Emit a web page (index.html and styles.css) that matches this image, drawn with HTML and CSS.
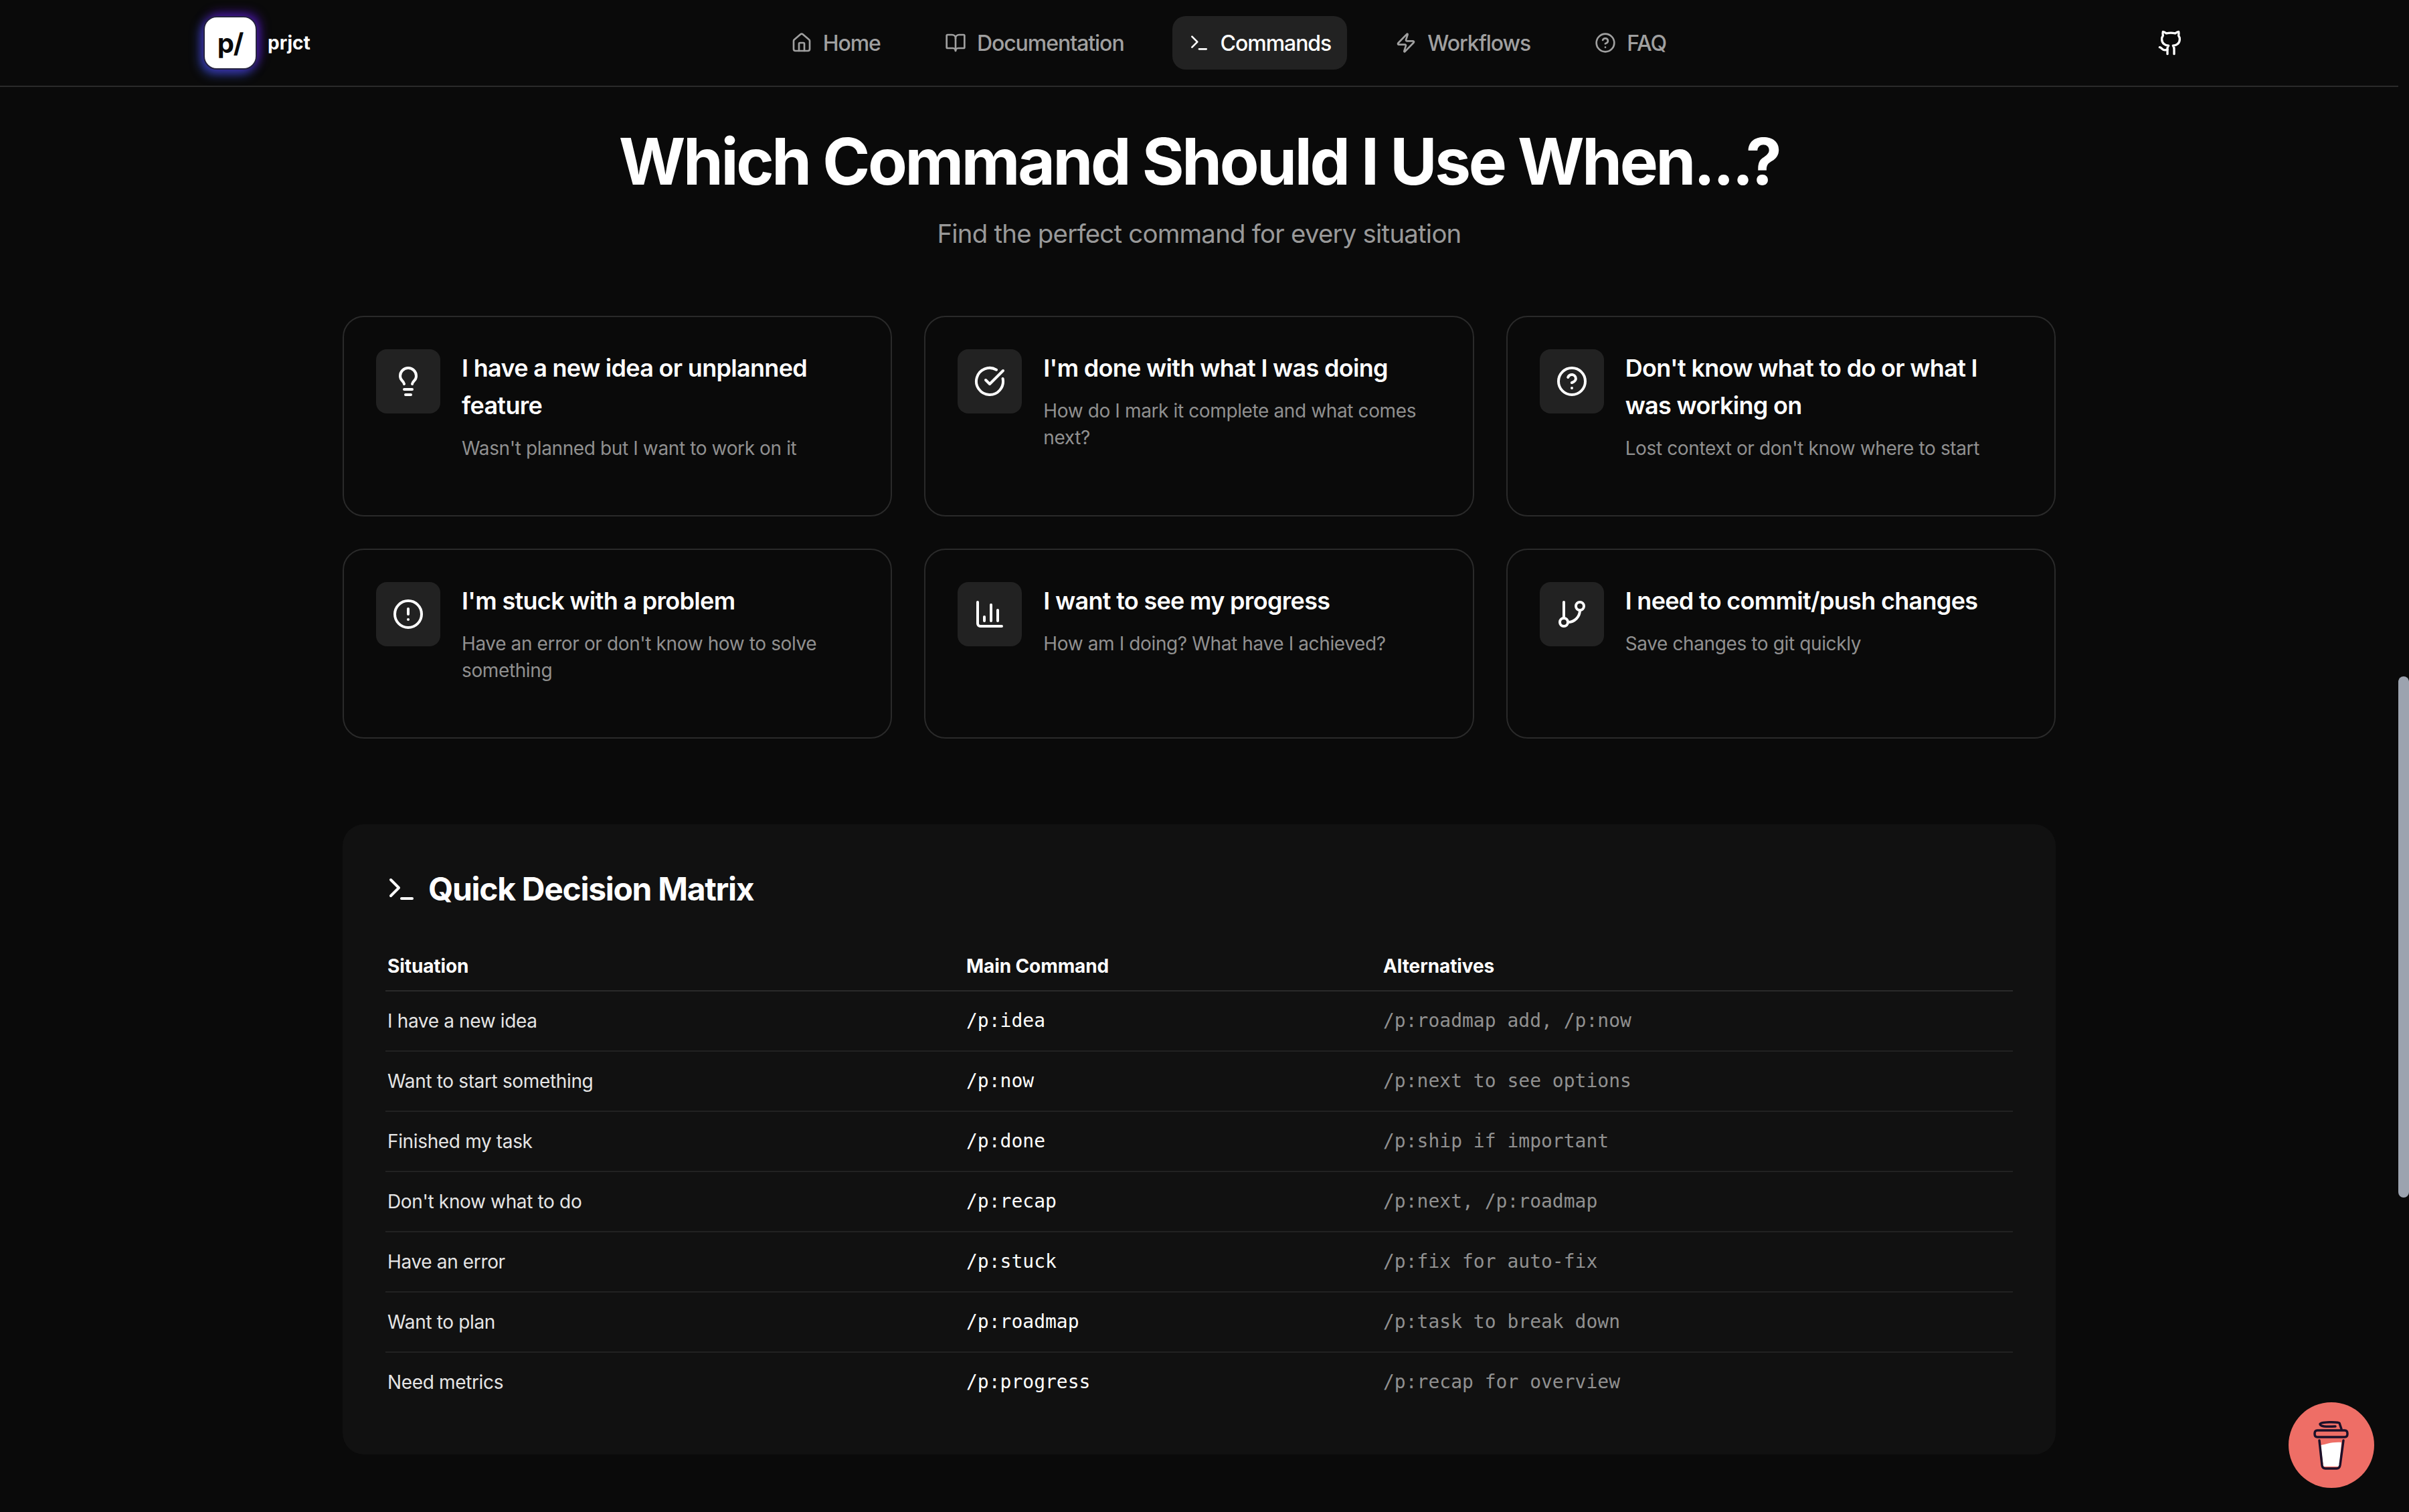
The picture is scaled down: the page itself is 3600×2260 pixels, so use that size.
FILE: index.html
```html
<!DOCTYPE html>
<html lang="en">
<head>
  <meta charset="UTF-8" />
  <meta name="viewport" content="width=device-width, initial-scale=1.0"/>
  <title>Commands - prjct</title>
  <link rel="stylesheet" href="styles.css">
</head>
<body>
  <svg class="sprite" xmlns="http://www.w3.org/2000/svg">
    <symbol id="i-home" viewBox="0 0 24 24"><path d="M15 21v-8a1 1 0 0 0-1-1h-4a1 1 0 0 0-1 1v8"/><path d="M3 10a2 2 0 0 1 .709-1.528l7-5.999a2 2 0 0 1 2.582 0l7 5.999A2 2 0 0 1 21 10v9a2 2 0 0 1-2 2H5a2 2 0 0 1-2-2z"/></symbol>
    <symbol id="i-book" viewBox="0 0 24 24"><path d="M12 7v14"/><path d="M3 18a1 1 0 0 1-1-1V4a1 1 0 0 1 1-1h5a4 4 0 0 1 4 4 4 4 0 0 1 4-4h5a1 1 0 0 1 1 1v13a1 1 0 0 1-1 1h-6a3 3 0 0 0-3 3 3 3 0 0 0-3-3z"/></symbol>
    <symbol id="i-terminal" viewBox="0 0 24 24"><polyline points="4 17 10 11 4 5"/><line x1="12" x2="20" y1="19" y2="19"/></symbol>
    <symbol id="i-zap" viewBox="0 0 24 24"><path d="M4 14a1 1 0 0 1-.78-1.63l9.9-10.2a.5.5 0 0 1 .86.46l-1.92 6.02A1 1 0 0 0 13 10h7a1 1 0 0 1 .78 1.63l-9.9 10.2a.5.5 0 0 1-.86-.46l1.92-6.02A1 1 0 0 0 11 14z"/></symbol>
    <symbol id="i-help" viewBox="0 0 24 24"><circle cx="12" cy="12" r="10"/><path d="M9.09 9a3 3 0 0 1 5.83 1c0 2-3 3-3 3"/><path d="M12 17h.01"/></symbol>
    <symbol id="i-github" viewBox="0 0 24 24"><path d="M15 22v-4a4.8 4.8 0 0 0-1-3.5c3 0 6-2 6-5.5.08-1.25-.27-2.48-1-3.5.28-1.15.28-2.35 0-3.5 0 0-1 0-3 1.5-2.64-.5-5.36-.5-8 0C6 2 5 2 5 2c-.3 1.15-.3 2.35 0 3.5A5.403 5.403 0 0 0 4 9c0 3.5 3 5.5 6 5.5-.39.49-.68 1.05-.85 1.65-.17.6-.22 1.23-.15 1.85v4"/><path d="M9 18c-4.51 2-5-2-7-2"/></symbol>
    <symbol id="i-bulb" viewBox="0 0 24 24"><path d="M15 14c.2-1 .7-1.7 1.5-2.5 1-.9 1.5-2.2 1.5-3.5A6 6 0 0 0 6 8c0 1 .2 2.2 1.5 3.5.7.7 1.3 1.5 1.5 2.5"/><path d="M9 18h6"/><path d="M10 22h4"/></symbol>
    <symbol id="i-check" viewBox="0 0 24 24"><path d="M21.801 10A10 10 0 1 1 17 3.335"/><path d="m9 11 3 3L22 4"/></symbol>
    <symbol id="i-alert" viewBox="0 0 24 24"><circle cx="12" cy="12" r="10"/><line x1="12" x2="12" y1="8" y2="12"/><line x1="12" x2="12.01" y1="16" y2="16"/></symbol>
    <symbol id="i-chart" viewBox="0 0 24 24"><path d="M3 3v16a2 2 0 0 0 2 2h16"/><path d="M18 17V9"/><path d="M13 17V5"/><path d="M8 17v-3"/></symbol>
    <symbol id="i-branch" viewBox="0 0 24 24"><line x1="6" x2="6" y1="3" y2="15"/><circle cx="18" cy="6" r="3"/><circle cx="6" cy="18" r="3"/><path d="M18 9a9 9 0 0 1-9 9"/></symbol>
  </svg>

  <div class="page">
    <header class="topbar">
      <a class="brand" href="#">
        <span class="brand-mark">p/</span>
        <span class="brand-name">prjct</span>
      </a>
      <nav class="nav">
        <a class="nav-item" href="#"><svg class="icon-nav"><use href="#i-home"/></svg>Home</a>
        <a class="nav-item" href="#"><svg class="icon-nav"><use href="#i-book"/></svg>Documentation</a>
        <a class="nav-item active" href="#"><svg class="icon-nav"><use href="#i-terminal"/></svg>Commands</a>
        <a class="nav-item" href="#"><svg class="icon-nav"><use href="#i-zap"/></svg>Workflows</a>
        <a class="nav-item" href="#"><svg class="icon-nav"><use href="#i-help"/></svg>FAQ</a>
      </nav>
      <a class="github-link" href="#"><svg class="icon-github"><use href="#i-github"/></svg></a>
    </header>

    <main class="content">
      <h1>Which Command Should I Use When...?</h1>
      <p class="lead">Find the perfect command for every situation</p>

      <section class="cards">
        <div class="card">
          <div class="card-icon"><svg class="icon-card"><use href="#i-bulb"/></svg></div>
          <div class="card-body">
            <h3>I have a new idea or unplanned feature</h3>
            <p>Wasn't planned but I want to work on it</p>
          </div>
        </div>
        <div class="card">
          <div class="card-icon"><svg class="icon-card"><use href="#i-check"/></svg></div>
          <div class="card-body">
            <h3>I'm done with what I was doing</h3>
            <p>How do I mark it complete and what comes next?</p>
          </div>
        </div>
        <div class="card">
          <div class="card-icon"><svg class="icon-card"><use href="#i-help"/></svg></div>
          <div class="card-body">
            <h3>Don't know what to do or what I was working on</h3>
            <p>Lost context or don't know where to start</p>
          </div>
        </div>
        <div class="card">
          <div class="card-icon"><svg class="icon-card"><use href="#i-alert"/></svg></div>
          <div class="card-body">
            <h3>I'm stuck with a problem</h3>
            <p>Have an error or don't know how to solve something</p>
          </div>
        </div>
        <div class="card">
          <div class="card-icon"><svg class="icon-card"><use href="#i-chart"/></svg></div>
          <div class="card-body">
            <h3>I want to see my progress</h3>
            <p>How am I doing? What have I achieved?</p>
          </div>
        </div>
        <div class="card">
          <div class="card-icon"><svg class="icon-card"><use href="#i-branch"/></svg></div>
          <div class="card-body">
            <h3>I need to commit/push changes</h3>
            <p>Save changes to git quickly</p>
          </div>
        </div>
      </section>

      <section class="matrix">
        <h2><svg class="icon-card"><use href="#i-terminal"/></svg>Quick Decision Matrix</h2>
        <table>
          <thead>
            <tr><th class="col-situation">Situation</th><th class="col-main">Main Command</th><th>Alternatives</th></tr>
          </thead>
          <tbody>
            <tr><td>I have a new idea</td><td class="cmd">/p:idea</td><td class="alt">/p:roadmap add, /p:now</td></tr>
            <tr><td>Want to start something</td><td class="cmd">/p:now</td><td class="alt">/p:next to see options</td></tr>
            <tr><td>Finished my task</td><td class="cmd">/p:done</td><td class="alt">/p:ship if important</td></tr>
            <tr><td>Don't know what to do</td><td class="cmd">/p:recap</td><td class="alt">/p:next, /p:roadmap</td></tr>
            <tr><td>Have an error</td><td class="cmd">/p:stuck</td><td class="alt">/p:fix for auto-fix</td></tr>
            <tr><td>Want to plan</td><td class="cmd">/p:roadmap</td><td class="alt">/p:task to break down</td></tr>
            <tr><td>Need metrics</td><td class="cmd">/p:progress</td><td class="alt">/p:recap for overview</td></tr>
          </tbody>
        </table>
      </section>
    </main>
  </div>

  <div class="scroll-thumb"></div>

  <a class="coffee" href="#">
    <svg viewBox="0 0 128 128" width="128" height="128">
      <path class="coffee-fill" d="M48 64c9-1 15-5 31-4l-3 36H52z"/>
      <path class="coffee-line" d="M46 57l4 37c.4 3 2 5 5 5h17c3 0 4.500-2 5-5l5-37"/>
      <path class="coffee-line" d="M43 42h41c3 0 4 2.500 4 5s-1 5-4 5H43c-3 0-4-2.500-4-5s1-5 4-5z"/>
      <path class="coffee-line" d="M79 40l-3-9c-1-2-29-2-29 1.500S55 37 70 36"/>
    </svg>
  </a>
</body>
</html>
```

FILE: styles.css
```css
* {
  box-sizing: border-box;
}
html, body {
  margin: 0;
  height: 2260px;
  overflow: hidden;
}
body {
  font-family: Inter, "Noto Sans", sans-serif;
  background-color: #0a0a0a;
  color: #fff;
}
a {
  color: inherit;
  text-decoration: none;
}
.sprite {
  display: none;
}
svg {
  fill: none;
  stroke: currentColor;
  stroke-width: 2;
  stroke-linecap: round;
  stroke-linejoin: round;
  flex-shrink: 0;
}
.icon-nav {
  width: 32px;
  height: 32px;
}
.icon-card {
  width: 48px;
  height: 48px;
}
.icon-github {
  width: 40px;
  height: 40px;
  display: block;
}
.page {
  width: 3584px;
}

/* top bar */
.topbar {
  height: 130px;
  padding: 0 304px;
  display: flex;
  align-items: center;
  justify-content: space-between;
  border-bottom: 2px solid #2a2a2a;
}
.brand {
  display: flex;
  align-items: center;
  gap: 16px;
}
.brand-mark {
  width: 80px;
  height: 80px;
  display: flex;
  align-items: center;
  justify-content: center;
  background-color: #fff;
  color: #0a0a0a;
  font-size: 40px;
  font-weight: 700;
  letter-spacing: -1px;
  border: 2px solid #25233f;
  border-radius: 20px;
  box-shadow: 4px -4px 16px #4a14a0, -4px 6px 16px #3346b8;
}
.brand-name {
  font-size: 28px;
  font-weight: 700;
}
.nav {
  display: flex;
  gap: 48px;
}
.nav-item {
  display: flex;
  align-items: center;
  gap: 16px;
  height: 80px;
  padding: 0 24px;
  font-size: 32px;
  font-weight: 500;
  letter-spacing: -1.05px;
  color: #a0a0a0;
  border-radius: 20px;
}
.nav-item.active {
  background-color: #222;
  color: #fff;
}
.github-link {
  padding: 16px;
}

/* heading */
.content {
  width: 2560px;
  margin: 0 auto;
  padding-top: 63px;
}
h1 {
  margin: 0 0 32px;
  font-size: 96px;
  line-height: 96px;
  font-weight: 700;
  letter-spacing: -3.3px;
  text-align: center;
}
.lead {
  margin: 0 0 95px;
  font-size: 38.4px;
  line-height: 56px;
  letter-spacing: -0.78px;
  color: #999;
  text-align: center;
}

/* situation cards */
.cards {
  display: grid;
  grid-template-columns: repeat(3, 1fr);
  gap: 48px;
  margin-bottom: 128px;
}
.card {
  display: flex;
  gap: 32px;
  padding: 48px 48px 80px;
  border: 2px solid #2a2a2a;
  border-radius: 32px;
}
.card-icon {
  width: 96px;
  height: 96px;
  display: flex;
  align-items: center;
  justify-content: center;
  flex-shrink: 0;
  background-color: #222;
  border-radius: 16px;
}
.card h3 {
  margin: 0 0 16px;
  font-size: 36px;
  line-height: 56px;
  font-weight: 600;
  letter-spacing: -0.69px;
}
.card p {
  margin: 0;
  font-size: 28px;
  line-height: 40px;
  letter-spacing: -0.38px;
  color: #909090;
}

/* decision matrix */
.matrix {
  padding: 64px;
  background-color: #111;
  border-radius: 32px;
}
.matrix h2 {
  display: flex;
  align-items: center;
  gap: 16px;
  margin: 0 0 48px;
  padding-top: 1px;
  font-size: 48px;
  line-height: 63px;
  font-weight: 700;
  letter-spacing: -1.3px;
}
table {
  width: 100%;
  border-collapse: collapse;
  table-layout: fixed;
  font-size: 28px;
  line-height: 40px;
}
th {
  padding: 16px 0;
  font-weight: 700;
  letter-spacing: -0.1px;
  text-align: left;
  border-bottom: 2px solid #2a2a2a;
}
td {
  padding: 24px 0;
  letter-spacing: -0.35px;
  color: #e5e5e5;
  border-bottom: 2px solid #222;
}
th:first-child, td:first-child {
  padding-left: 3px;
}
tbody tr:last-child td {
  border-bottom: none;
}
.col-situation {
  width: 868px;
}
.col-main {
  width: 623px;
}
.cmd, .alt {
  font-family: "DejaVu Sans Mono", "Liberation Mono", monospace;
  letter-spacing: 0;
}
.cmd {
  color: #fff;
}
.alt {
  color: #909090;
}

/* overlays */
.scroll-thumb {
  position: absolute;
  top: 1011px;
  left: 3584px;
  width: 16px;
  height: 779px;
  background-color: #9ca3af;
  border-radius: 8px;
}
.coffee {
  position: fixed;
  right: 52px;
  bottom: 36px;
  width: 128px;
  height: 128px;
  background-color: #ee6e66;
  border-radius: 50%;
}
.coffee svg {
  display: block;
}
.coffee-fill {
  fill: #fff;
  stroke: none;
}
.coffee-line {
  stroke: #1c1029;
  stroke-width: 3.5;
}
```
